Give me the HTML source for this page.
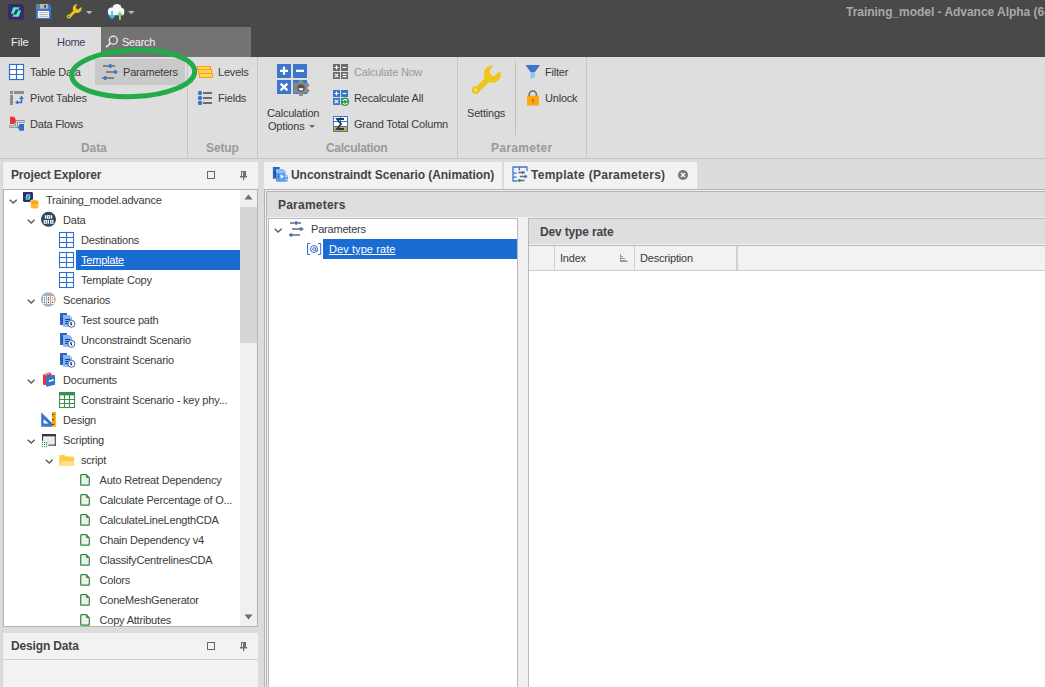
<!DOCTYPE html>
<html><head><meta charset="utf-8">
<style>
*{box-sizing:border-box;margin:0;padding:0}
html,body{width:1045px;height:687px;overflow:hidden;background:#dcdcdc;font-family:"Liberation Sans",sans-serif;font-size:11px;color:#3a3a3a;letter-spacing:-0.2px}
.a{position:absolute}
.t{position:absolute;white-space:nowrap;line-height:13px}
.b{font-weight:bold}
svg{position:absolute;overflow:visible}
</style></head><body>

<!-- title bar -->
<div class="a" style="left:0;top:0;width:1045px;height:57px;background:#494949"></div>
<div class="t b" style="left:846px;top:6px;font-size:12px;color:#a9a9a9;letter-spacing:-0.03px">Training_model - Advance Alpha (64-bit)</div>


<!-- title icons -->
<svg style="left:8px;top:4px" width="17" height="17"><path d="M0 0H14L16 2V15.7H2L0 13.7Z" fill="#372a6c"/><path d="M5.2 3.2H11.5L10.6 5.5H7.8L5.8 9.8H3Z" fill="#4cf0c8"/><path d="M10.8 12.8H4.5L5.4 10.5H8.2L10.2 6.2H13Z" fill="#4cf0c8"/></svg>
<svg style="left:36px;top:4px" width="16" height="16"><path d="M0 0H12.8L15 2.2V15H0Z" fill="#3b7ad0"/><rect x="1.7" y="0" width="10.1" height="4.7" fill="#b8b8b8"/><rect x="1.7" y="0" width="2.3" height="4.7" fill="#7a7a7a"/><rect x="8.1" y="1.2" width="1.9" height="2.5" fill="#454545"/><rect x="1.9" y="7" width="11" height="6.8" fill="#fff"/><path d="M3.2 8.6H11.8M3.2 10.5H11.8M3.2 12.3H11.8" stroke="#9a9a9a" stroke-width="0.8"/></svg>
<svg style="left:66px;top:4px" width="17" height="17"><defs><mask id="wm2"><rect x="-5" y="-5" width="30" height="30" fill="#fff"/><path d="M12.6 -1L9.9 2.6Q9.5 3.2 10 3.9L11 5.2Q11.6 5.8 12.3 5.3L16.5 2Z" fill="#000"/><circle cx="2.85" cy="12.5" r="0.8" fill="#000"/></mask></defs><g mask="url(#wm2)" fill="#f0c419"><circle cx="11.15" cy="4.6" r="4.4"/><path d="M9.2 4.7L11.2 6.7L4.1 13.9L2.1 11.9Z"/><circle cx="2.85" cy="12.5" r="2.1"/></g></svg>
<svg style="left:86px;top:11px" width="7" height="4"><path d="M0 0H6.5L3.25 3.2Z" fill="#b9b9b9"/></svg>
<svg style="left:107px;top:3px" width="19" height="18"><g fill="#fafafa"><circle cx="10" cy="5.6" r="4.6"/><circle cx="4.6" cy="8.2" r="3.7"/><circle cx="14.3" cy="8" r="3"/><rect x="1" y="8" width="16.3" height="4" rx="2"/></g><rect x="4.2" y="8" width="1.7" height="5" fill="#48b8f0"/><path d="M1.3 12H8.8L5.05 16.6Z" fill="#48b8f0"/><path d="M9.2 12.6H16.6L12.9 8Z" fill="#8ee0a8"/><rect x="12" y="12.4" width="1.8" height="4.4" fill="#8ee0a8"/></svg>
<svg style="left:128px;top:11px" width="7" height="4"><path d="M0 0H6.5L3.25 3.2Z" fill="#b9b9b9"/></svg>

<!-- tabs -->
<div class="t" style="left:11px;top:36px;color:#f2f2f2;font-size:11px;letter-spacing:0">File</div>
<div class="a" style="left:40px;top:27px;width:61px;height:31px;background:#dedede"></div>
<div class="t" style="left:57px;top:36px;color:#3c3c6a;font-size:11px;letter-spacing:-0.3px">Home</div>
<div class="a" style="left:101px;top:27px;width:150px;height:30px;background:#737373"></div>
<div class="t" style="left:122px;top:36px;color:#f4f4f4;font-size:11px;letter-spacing:-0.3px">Search</div>

<!-- search icon -->
<svg style="left:105px;top:35px" width="14" height="14"><circle cx="8.3" cy="5.2" r="4" stroke="#f2f2f2" stroke-width="1.3" fill="none"/><path d="M5.5 8L1.2 12.3" stroke="#f2f2f2" stroke-width="1.6"/></svg>
<!-- ribbon -->
<div class="a" style="left:0;top:57px;width:1045px;height:102px;background:#dedede;border-bottom:1px solid #c4c4c4"></div>


<!-- ribbon content -->
<div class="a" style="left:95px;top:59px;width:90px;height:26px;background:#c9c9c9"></div>
<div class="a" style="left:187px;top:57px;width:1px;height:101px;background:#c6c6c6"></div>
<div class="a" style="left:257px;top:57px;width:1px;height:101px;background:#c6c6c6"></div>
<div class="a" style="left:457px;top:57px;width:1px;height:101px;background:#c6c6c6"></div>
<div class="a" style="left:586px;top:57px;width:1px;height:101px;background:#c6c6c6"></div>
<div class="a" style="left:515px;top:61px;width:1px;height:74px;background:#c0c0c0"></div>

<!-- table data icon -->
<svg style="left:9px;top:64px" width="16" height="17"><rect x="0.5" y="0.5" width="14" height="15" fill="#fff" stroke="#2f70cf" stroke-width="1.2"/><path d="M7.5 0V16M0 5.5H15M0 10.5H15" stroke="#2f70cf" stroke-width="1.2"/></svg>
<div class="t" style="left:30px;top:66px">Table Data</div>
<!-- params sliders -->
<svg style="left:102px;top:64px" width="17" height="17"><path d="M1 2H13M4 8H15.5M0 14H12" stroke="#6b6b6b" stroke-width="1.7"/><rect x="7" y="0" width="2.6" height="4" rx="1" fill="#3b76cc"/><rect x="12" y="6" width="2.6" height="4" rx="1" fill="#3b76cc"/><rect x="2" y="12" width="2.6" height="4" rx="1" fill="#3b76cc"/></svg>
<div class="t" style="left:123px;top:66px">Parameters</div>
<!-- pivot -->
<svg style="left:9px;top:91px" width="16" height="15"><rect x="1" y="0" width="3" height="3" fill="#8c8c8c"/><rect x="1" y="4" width="3" height="10" fill="#8c8c8c"/><rect x="5" y="0" width="10" height="3" fill="#8c8c8c"/><path d="M12.5 7V11.4H8" stroke="#2f6fc9" stroke-width="1.5" fill="none"/><path d="M10.2 8L12.5 4.6L14.8 8ZM9 9.2L6 11.4L9 13.6Z" fill="#2f6fc9"/></svg>
<div class="t" style="left:30px;top:92px">Pivot Tables</div>
<!-- data flows -->
<svg style="left:9px;top:117px" width="17" height="15"><path d="M14.3 4.45H7.6V9.65H1.7" stroke="#8c8c8c" stroke-width="2.7" fill="none" stroke-linecap="square"/><path d="M14.3 4.45H7.6V9.65H1.7" stroke="#e6e6e6" stroke-width="0.9" fill="none" stroke-linecap="square"/><path d="M1 -0.2H5.4L7 3.5L5.4 7.1H1Z" fill="#e5323f"/><path d="M15 7.1V13.8H10.5L9 10.5L10.5 7.1Z" fill="#2f6fc9"/></svg>
<div class="t" style="left:30px;top:118px">Data Flows</div>
<div class="t b" style="left:81px;top:142px;font-size:12px;color:#9a9a9a;letter-spacing:-0.1px">Data</div>

<!-- levels -->
<svg style="left:197px;top:66px" width="17" height="13"><rect x="0.5" y="0.5" width="13" height="3" fill="#ffd26a" stroke="#ff9f00"/><rect x="1.5" y="3.5" width="13" height="4" fill="#ffd26a" stroke="#ff9f00"/><rect x="2.5" y="7.5" width="13" height="4" fill="#ffd26a" stroke="#ff9f00"/></svg>
<div class="t" style="left:218px;top:66px">Levels</div>
<!-- fields -->
<svg style="left:197px;top:90px" width="16" height="16"><circle cx="3" cy="3" r="2.2" fill="#3b76cc"/><circle cx="3" cy="8" r="2.2" fill="#3b76cc"/><circle cx="3" cy="13" r="2.2" fill="#3b76cc"/><path d="M6 3H15M6 8H15M6 13H15" stroke="#6b6b6b" stroke-width="2"/></svg>
<div class="t" style="left:218px;top:92px">Fields</div>
<div class="t b" style="left:206px;top:142px;font-size:12px;color:#9a9a9a;letter-spacing:-0.1px">Setup</div>

<!-- calculation options -->
<svg style="left:277px;top:64px" width="33" height="33"><rect x="0" y="0" width="14" height="14" fill="#3b76cc"/><rect x="16" y="0" width="14" height="14" fill="#3b76cc"/><rect x="0" y="16" width="14" height="14" fill="#3b76cc"/><rect x="16" y="16" width="14" height="14" fill="#3b76cc"/>
<path d="M3 6.8H11M7 2.8V10.8M19 6.8H27M3.6 19.6L10.4 26.4M10.4 19.6L3.6 26.4" stroke="#fff" stroke-width="2.2"/>
<g transform="translate(24,24)"><path d="M-1.8,-8 L1.8,-8 L2.3,-5.6 L4.6,-4.4 L6.8,-5.4 L8.6,-2.3 L6.6,-0.9 L6.6,0.9 L8.6,2.3 L6.8,5.4 L4.6,4.4 L2.3,5.6 L1.8,8 L-1.8,8 L-2.3,5.6 L-4.6,4.4 L-6.8,5.4 L-8.6,2.3 L-6.6,0.9 L-6.6,-0.9 L-8.6,-2.3 L-6.8,-5.4 L-4.6,-4.4 L-2.3,-5.6Z" fill="#8a8a8a"/><circle r="3.8" fill="#555"/><path d="M-2.4 0.2A2.4 2.4 0 0 0 2.4 0.2Z" fill="#fff"/></g></svg>
<div class="t" style="left:267px;top:107px">Calculation</div>
<div class="t" style="left:268px;top:120px">Options</div>
<svg style="left:309px;top:125px" width="6" height="4"><path d="M0 0H6L3 3Z" fill="#6b6b6b"/></svg>

<!-- calc now -->
<svg style="left:333px;top:64px" width="15" height="15"><rect x="0" y="0" width="7" height="7" fill="#6b6b6b"/><rect x="8" y="0" width="7" height="7" fill="#6b6b6b"/><rect x="0" y="8" width="7" height="7" fill="#6b6b6b"/><rect x="8" y="8" width="7" height="7" fill="#6b6b6b"/><path d="M1.5 3.5H5.5M3.5 1.5V5.5M9.5 3.5H13.5M1.8 9.8L5.2 13.2M5.2 9.8L1.8 13.2M9.5 10.3H13.5M9.5 12.7H13.5" stroke="#fff" stroke-width="1.2"/></svg>
<div class="t" style="left:354px;top:66px;color:#9a9a9a">Calculate Now</div>
<!-- recalc all -->
<svg style="left:333px;top:90px" width="16" height="16"><rect x="0" y="0" width="7" height="7" fill="#3b76cc"/><rect x="8" y="0" width="7" height="7" fill="#3b76cc"/><rect x="0" y="8" width="7" height="7" fill="#3b76cc"/><rect x="8" y="8" width="7" height="7" fill="#3b76cc"/><path d="M1.5 3.5H5.5M3.5 1.5V5.5M9.5 3.5H13.5M1.8 9.8L5.2 13.2M5.2 9.8L1.8 13.2" stroke="#fff" stroke-width="1.2"/><circle cx="12" cy="11.8" r="4.2" fill="#2e9a4a"/><path d="M9.8 11.2A2.3 2.3 0 0 1 14 10.6M14.2 12.4A2.3 2.3 0 0 1 10 13" stroke="#fff" stroke-width="1.1" fill="none"/></svg>
<div class="t" style="left:354px;top:92px">Recalculate All</div>
<!-- grand total -->
<svg style="left:333px;top:116px" width="16" height="16"><rect x="0.5" y="0.5" width="14" height="15" fill="#fff" stroke="#3b76cc"/><path d="M1 5.5H15M1 10.5H15M7.5 1V15" stroke="#3b76cc"/><rect x="1" y="11" width="13" height="4" fill="#f5a300"/><path d="M11 3H4L8 8L4 13H11" stroke="#253a55" stroke-width="1.8" fill="none"/></svg>
<div class="t" style="left:354px;top:118px">Grand Total Column</div>
<div class="t b" style="left:326px;top:142px;font-size:12px;color:#9a9a9a;letter-spacing:-0.3px">Calculation</div>

<!-- settings -->
<svg style="left:470px;top:65px" width="32" height="30"><defs><mask id="wm"><rect x="-5" y="-5" width="45" height="45" fill="#fff"/><path d="M25.2 -2L19.8 5.2Q19 6.5 20 7.8L22 10.4Q23.2 11.6 24.6 10.6L33 4Z" fill="#000"/><circle cx="5.7" cy="25" r="1.4" fill="#000"/></mask></defs><g mask="url(#wm)" fill="#f0c419"><circle cx="22.3" cy="9.2" r="8.6"/><path d="M18.5 9.5L22.5 13.5L8.2 27.8L4.2 23.8Z"/><circle cx="5.7" cy="25" r="3.9"/></g></svg>
<div class="t" style="left:467px;top:107px">Settings</div>
<!-- filter -->
<svg style="left:525px;top:65px" width="16" height="15"><path d="M0.5 0H15L10 7H5.5Z" fill="#3b76cc"/><path d="M5.5 7H10V12L5.8 14Z" fill="#8ec4fc"/></svg>
<div class="t" style="left:545px;top:66px">Filter</div>
<!-- unlock -->
<svg style="left:526px;top:90px" width="14" height="16"><path d="M3.2 6.5V4.6A3.6 3.6 0 0 1 10.4 4.6V6.5" stroke="#6b6b6b" stroke-width="1.6" fill="none"/><rect x="1" y="5.8" width="12" height="9.8" rx="1.2" fill="#ffa808"/><circle cx="7" cy="10" r="1.1" fill="#6f7891"/><path d="M6.3 10.3H7.7L7.3 13.2H6.7Z" fill="#6f7891"/></svg>
<div class="t" style="left:545px;top:92px">Unlock</div>
<div class="t b" style="left:491px;top:142px;font-size:12px;color:#9a9a9a;letter-spacing:0.3px">Parameter</div>

<!-- green ellipse -->
<svg style="left:0;top:0" width="300" height="120"><ellipse cx="133.2" cy="73.4" rx="61.5" ry="23.2" fill="none" stroke="#22ab4b" stroke-width="5" transform="rotate(-2 133 73)"/></svg>

<!-- panels -->
<!-- Project explorer -->
<div class="a" style="left:2px;top:159px;width:1px;height:528px;background:#d2d2d2"></div>
<div class="a" style="left:3px;top:162px;width:255px;height:27px;background:#f2f2f2"></div>
<div class="t b" style="left:11px;top:169px;font-size:12px;letter-spacing:-0.15px;color:#444">Project Explorer</div>
<div class="a" style="left:3px;top:189px;width:255px;height:438px;background:#fff;border:1px solid #b4b4b4"></div>
<div class="a" style="left:240px;top:190px;width:17px;height:436px;background:#f0f0f0"></div>
<div class="a" style="left:240px;top:207px;width:17px;height:136px;background:#d5d5d5"></div>

<!-- tree -->
<div class="a" style="left:4px;top:189px;width:236px;height:437px;overflow:hidden;clip-path:inset(1px 0 0 0)">
<svg style="left:5px;top:9.5px" width="9" height="6"><path d="M0.7 0.8L4.2 4.1L7.7 0.8" stroke="#595959" stroke-width="1.35" fill="none"/></svg>
<svg style="left:18px;top:3px" width="18" height="17"><path d="M1 0H10L11 1V10H2L1 9Z" fill="#372a6c"/><path d="M4.6 2.3H8.4L7.9 3.6H6.2L5 6.3H3.3Z" fill="#4cf0c8"/><path d="M7.4 7.7H3.6L4.1 6.4H5.8L7 3.7H8.7Z" fill="#4cf0c8"/><g fill="#ffa60d" stroke="#fff" stroke-width="0.8"><path d="M8.4 9.6A4.2 1.9 0 0 1 16.8 9.6V15A4.2 1.9 0 0 1 8.4 15Z"/></g><path d="M8.8 12.3A3.9 1.2 0 0 0 16.4 12.3M8.8 14.2A3.9 1.2 0 0 0 16.4 14.2" stroke="#ffd890" stroke-width="0.8" fill="none"/></svg>
<div class="t" style="left:42px;top:5px">Training_model.advance</div>
<svg style="left:23px;top:29.5px" width="9" height="6"><path d="M0.7 0.8L4.2 4.1L7.7 0.8" stroke="#595959" stroke-width="1.35" fill="none"/></svg>
<svg style="left:37px;top:23px" width="16" height="16"><circle cx="7.5" cy="7.3" r="7.5" fill="#2c4a62"/><g fill="#fff"><rect x="3.9" y="3.2" width="1.3" height="3.4"/><rect x="9.9" y="3.2" width="1.3" height="3.4"/><rect x="6.7" y="8.1" width="1.3" height="3.6"/></g><g fill="none" stroke="#fff" stroke-width="1.1"><rect x="6.4" y="3.75" width="2.3" height="2.4"/><rect x="3.3" y="8.65" width="2.3" height="2.5"/><rect x="9.6" y="8.65" width="2.3" height="2.5"/></g></svg>
<div class="t" style="left:59px;top:25px">Data</div>
<svg style="left:55px;top:43px" width="16" height="17"><rect x="0.5" y="0.5" width="14" height="15" fill="#fff" stroke="#2f70cf" stroke-width="1.1"/><path d="M7.5 0V16M0 5.5H15M0 10.5H15" stroke="#2f70cf" stroke-width="1.1"/></svg>
<div class="t" style="left:77px;top:45px">Destinations</div>
<div class="a" style="left:72px;top:61px;width:164px;height:20px;background:#1b6cd2"></div>
<svg style="left:55px;top:63px" width="16" height="17"><rect x="0.5" y="0.5" width="14" height="15" fill="#fff" stroke="#2f70cf" stroke-width="1.1"/><path d="M7.5 0V16M0 5.5H15M0 10.5H15" stroke="#2f70cf" stroke-width="1.1"/></svg>
<div class="t" style="left:77px;top:65px;color:#fff;text-decoration:underline">Template</div>
<svg style="left:55px;top:83px" width="16" height="17"><rect x="0.5" y="0.5" width="14" height="15" fill="#fff" stroke="#2f70cf" stroke-width="1.1"/><path d="M7.5 0V16M0 5.5H15M0 10.5H15" stroke="#2f70cf" stroke-width="1.1"/></svg>
<div class="t" style="left:77px;top:85px">Template Copy</div>
<svg style="left:23px;top:109.5px" width="9" height="6"><path d="M0.7 0.8L4.2 4.1L7.7 0.8" stroke="#595959" stroke-width="1.35" fill="none"/></svg>
<svg style="left:37px;top:103px" width="16" height="16"><circle cx="7.3" cy="7.5" r="7.3" fill="#aab0b8"/><g fill="#fff"><rect x="2.1" y="4" width="2.9" height="7.8"/><rect x="6" y="4" width="2.9" height="7.8"/><rect x="10" y="4" width="2.9" height="7.8"/></g><path d="M3.55 4.8V8.9" stroke="#4ab4f0" stroke-width="1.2"/><path d="M7.45 4.8V8.9" stroke="#f0624a" stroke-width="1.2"/><path d="M11.45 4.8V8.9" stroke="#f8c64a" stroke-width="1.2"/><g fill="#3d4a57"><circle cx="3.55" cy="10.4" r="0.7"/><circle cx="7.45" cy="10.4" r="0.7"/><circle cx="11.45" cy="10.4" r="0.7"/></g></svg>
<div class="t" style="left:59px;top:105px">Scenarios</div>
<svg style="left:55px;top:124px" width="17" height="16"><rect x="1" y="0" width="7" height="12" fill="#2f64c0"/><g fill="#0a3a9a"><circle cx="3.4" cy="5.4" r="0.6"/><circle cx="3.4" cy="7.5" r="0.6"/><circle cx="3.4" cy="9.5" r="0.6"/></g><path d="M4 2H10.5L13 4.5V13.8H4Z" fill="#86b6f7"/><path d="M6.2 6.5H11M6.2 8.5H11M6.2 10.5H9.5" stroke="#0b3a9c" stroke-width="1"/><circle cx="12.4" cy="10.8" r="3.5" fill="#fff" stroke="#2f64c0" stroke-width="1"/><path d="M12 9.1V11.1L12.9 12" stroke="#111" stroke-width="1.2" fill="none"/></svg>
<div class="t" style="left:77px;top:125px">Test source path</div>
<svg style="left:55px;top:144px" width="17" height="16"><rect x="1" y="0" width="7" height="12" fill="#2f64c0"/><g fill="#0a3a9a"><circle cx="3.4" cy="5.4" r="0.6"/><circle cx="3.4" cy="7.5" r="0.6"/><circle cx="3.4" cy="9.5" r="0.6"/></g><path d="M4 2H10.5L13 4.5V13.8H4Z" fill="#86b6f7"/><path d="M6.2 6.5H11M6.2 8.5H11M6.2 10.5H9.5" stroke="#0b3a9c" stroke-width="1"/><circle cx="12.4" cy="10.8" r="3.5" fill="#fff" stroke="#2f64c0" stroke-width="1"/><path d="M12 9.1V11.1L12.9 12" stroke="#111" stroke-width="1.2" fill="none"/></svg>
<div class="t" style="left:77px;top:145px">Unconstraindt Scenario</div>
<svg style="left:55px;top:164px" width="17" height="16"><rect x="1" y="0" width="7" height="12" fill="#2f64c0"/><g fill="#0a3a9a"><circle cx="3.4" cy="5.4" r="0.6"/><circle cx="3.4" cy="7.5" r="0.6"/><circle cx="3.4" cy="9.5" r="0.6"/></g><path d="M4 2H10.5L13 4.5V13.8H4Z" fill="#86b6f7"/><path d="M6.2 6.5H11M6.2 8.5H11M6.2 10.5H9.5" stroke="#0b3a9c" stroke-width="1"/><circle cx="12.4" cy="10.8" r="3.5" fill="#fff" stroke="#2f64c0" stroke-width="1"/><path d="M12 9.1V11.1L12.9 12" stroke="#111" stroke-width="1.2" fill="none"/></svg>
<div class="t" style="left:77px;top:165px">Constraint Scenario</div>
<svg style="left:23px;top:189.5px" width="9" height="6"><path d="M0.7 0.8L4.2 4.1L7.7 0.8" stroke="#595959" stroke-width="1.35" fill="none"/></svg>
<svg style="left:38px;top:183px" width="14" height="16"><path d="M1 2.5L7.3 0.3L9.5 1.6V11L4.5 13L1 12.8Z" fill="#e8323e"/><path d="M1.3 2.6L7.3 0.8L8.4 1.6L3 3.6Z" fill="#f5a0a6"/><path d="M4 4.3L12.3 2.8L13 3.6V12.8L4.6 14.8L4 14.1Z" fill="#3a73c9"/><path d="M6.8 9.2L11.8 7.8" stroke="#fff" stroke-width="1.6"/></svg>
<div class="t" style="left:59px;top:185px">Documents</div>
<svg style="left:55px;top:203px" width="17" height="17"><rect x="0.5" y="0.5" width="15" height="15" fill="#fff" stroke="#3d8f50" stroke-width="1.1"/><rect x="0" y="0" width="16" height="3.4" fill="#3d8f50"/><path d="M5.5 3V16M10.5 3V16M0 7.5H16M0 11.5H16" stroke="#3d8f50" stroke-width="1.1"/></svg>
<div class="t" style="left:77px;top:205px">Constraint Scenario - key phy...</div>
<svg style="left:37px;top:223px" width="16" height="16"><path d="M0.2 0.2L11 11V14.7H0.2Z" fill="#3a73c9"/><path d="M2.6 7.2L7.6 11.6H2.6Z" fill="#fff"/><rect x="11" y="0" width="3.8" height="14.7" fill="#f5a300"/><path d="M11 2.5H13M11 7.5H13M11 12.5H13" stroke="#2c3e66" stroke-width="0.9"/></svg>
<div class="t" style="left:59px;top:225px">Design</div>
<svg style="left:23px;top:249.5px" width="9" height="6"><path d="M0.7 0.8L4.2 4.1L7.7 0.8" stroke="#595959" stroke-width="1.35" fill="none"/></svg>
<svg style="left:37px;top:245px" width="16" height="14"><rect x="2.6" y="3.4" width="10.6" height="6.8" fill="#ebebef"/><rect x="1" y="0" width="13.8" height="2.4" fill="#383838"/><rect x="1" y="0" width="1.1" height="7" fill="#383838"/><rect x="13.7" y="0" width="1.1" height="11.7" fill="#383838"/><rect x="7.2" y="10.6" width="7.6" height="1.1" fill="#383838"/><rect x="0.9" y="8" width="1.1" height="1.1" fill="#2e8b37"/><rect x="0.9" y="10" width="1.1" height="1.1" fill="#2e8b37"/><rect x="0.9" y="12.1" width="1.1" height="1.1" fill="#2e8b37"/><rect x="3" y="8" width="1.1" height="1.1" fill="#2e8b37"/><rect x="3" y="10" width="1.1" height="1.1" fill="#2e8b37"/><rect x="3" y="12.1" width="1.1" height="1.1" fill="#2e8b37"/><rect x="5.1" y="8" width="1.1" height="1.1" fill="#2e8b37"/><rect x="5.1" y="10" width="1.1" height="1.1" fill="#2e8b37"/><rect x="5.1" y="12.1" width="1.1" height="1.1" fill="#2e8b37"/></svg>
<div class="t" style="left:59px;top:245px">Scripting</div>
<svg style="left:41px;top:269.5px" width="9" height="6"><path d="M0.7 0.8L4.2 4.1L7.7 0.8" stroke="#595959" stroke-width="1.35" fill="none"/></svg>
<svg style="left:55px;top:266px" width="16" height="13"><path d="M0.3 0.6Q0.3 0 0.9 0H5.5L6.6 1.5H14.5Q15.1 1.5 15.1 2.1V10.8H0.3Z" fill="#ffcb45"/><path d="M2.3 6.3H15.4L14 10.8H0.5Z" fill="#ffe08c"/></svg>
<div class="t" style="left:77px;top:265px">script</div>
<svg style="left:76px;top:285px" width="11" height="13"><path d="M0.7 1.3A0.6 0.6 0 0 1 1.3 0.7H6.3L9.3 3.7V10.6A0.6 0.6 0 0 1 8.7 11.2H1.3A0.6 0.6 0 0 1 0.7 10.6Z" fill="#efeff2" stroke="#2e8b37" stroke-width="1.2"/><path d="M6.1 0.9V3.9H9.1Z" fill="#2e8b37"/></svg>
<div class="t" style="left:95.5px;top:285px">Auto Retreat Dependency</div>
<svg style="left:76px;top:305px" width="11" height="13"><path d="M0.7 1.3A0.6 0.6 0 0 1 1.3 0.7H6.3L9.3 3.7V10.6A0.6 0.6 0 0 1 8.7 11.2H1.3A0.6 0.6 0 0 1 0.7 10.6Z" fill="#efeff2" stroke="#2e8b37" stroke-width="1.2"/><path d="M6.1 0.9V3.9H9.1Z" fill="#2e8b37"/></svg>
<div class="t" style="left:95.5px;top:305px">Calculate Percentage of O...</div>
<svg style="left:76px;top:325px" width="11" height="13"><path d="M0.7 1.3A0.6 0.6 0 0 1 1.3 0.7H6.3L9.3 3.7V10.6A0.6 0.6 0 0 1 8.7 11.2H1.3A0.6 0.6 0 0 1 0.7 10.6Z" fill="#efeff2" stroke="#2e8b37" stroke-width="1.2"/><path d="M6.1 0.9V3.9H9.1Z" fill="#2e8b37"/></svg>
<div class="t" style="left:95.5px;top:325px">CalculateLineLengthCDA</div>
<svg style="left:76px;top:345px" width="11" height="13"><path d="M0.7 1.3A0.6 0.6 0 0 1 1.3 0.7H6.3L9.3 3.7V10.6A0.6 0.6 0 0 1 8.7 11.2H1.3A0.6 0.6 0 0 1 0.7 10.6Z" fill="#efeff2" stroke="#2e8b37" stroke-width="1.2"/><path d="M6.1 0.9V3.9H9.1Z" fill="#2e8b37"/></svg>
<div class="t" style="left:95.5px;top:345px">Chain Dependency v4</div>
<svg style="left:76px;top:365px" width="11" height="13"><path d="M0.7 1.3A0.6 0.6 0 0 1 1.3 0.7H6.3L9.3 3.7V10.6A0.6 0.6 0 0 1 8.7 11.2H1.3A0.6 0.6 0 0 1 0.7 10.6Z" fill="#efeff2" stroke="#2e8b37" stroke-width="1.2"/><path d="M6.1 0.9V3.9H9.1Z" fill="#2e8b37"/></svg>
<div class="t" style="left:95.5px;top:365px">ClassifyCentrelinesCDA</div>
<svg style="left:76px;top:385px" width="11" height="13"><path d="M0.7 1.3A0.6 0.6 0 0 1 1.3 0.7H6.3L9.3 3.7V10.6A0.6 0.6 0 0 1 8.7 11.2H1.3A0.6 0.6 0 0 1 0.7 10.6Z" fill="#efeff2" stroke="#2e8b37" stroke-width="1.2"/><path d="M6.1 0.9V3.9H9.1Z" fill="#2e8b37"/></svg>
<div class="t" style="left:95.5px;top:385px">Colors</div>
<svg style="left:76px;top:405px" width="11" height="13"><path d="M0.7 1.3A0.6 0.6 0 0 1 1.3 0.7H6.3L9.3 3.7V10.6A0.6 0.6 0 0 1 8.7 11.2H1.3A0.6 0.6 0 0 1 0.7 10.6Z" fill="#efeff2" stroke="#2e8b37" stroke-width="1.2"/><path d="M6.1 0.9V3.9H9.1Z" fill="#2e8b37"/></svg>
<div class="t" style="left:95.5px;top:405px">ConeMeshGenerator</div>
<svg style="left:76px;top:425px" width="11" height="13"><path d="M0.7 1.3A0.6 0.6 0 0 1 1.3 0.7H6.3L9.3 3.7V10.6A0.6 0.6 0 0 1 8.7 11.2H1.3A0.6 0.6 0 0 1 0.7 10.6Z" fill="#efeff2" stroke="#2e8b37" stroke-width="1.2"/><path d="M6.1 0.9V3.9H9.1Z" fill="#2e8b37"/></svg>
<div class="t" style="left:95.5px;top:425px">Copy Attributes</div>
</div>
<svg style="left:244px;top:194px" width="9" height="6"><path d="M0.5 5.5H8.5L4.5 0.5Z" fill="#6d6d6d"/></svg>
<svg style="left:244px;top:614px" width="9" height="6"><path d="M0.5 0.5H8.5L4.5 5.5Z" fill="#6d6d6d"/></svg>
<div class="a" style="left:207px;top:171px;width:8px;height:8px;border:1.2px solid #666"></div><svg style="left:238px;top:170px" width="10" height="11"><rect x="3.5" y="1.5" width="4" height="5" fill="none" stroke="#6e6e6e"/><rect x="5" y="1.5" width="2.5" height="5" fill="#6e6e6e"/><rect x="2" y="6" width="7" height="1.5" fill="#6e6e6e"/><rect x="5" y="7" width="1.2" height="3.2" fill="#6e6e6e"/></svg>
<!-- Design data -->
<div class="a" style="left:3px;top:633px;width:255px;height:60px;background:#f2f2f2"></div>
<div class="a" style="left:3px;top:659px;width:255px;height:1px;background:#d0d0d0"></div>
<div class="t b" style="left:11px;top:639.5px;font-size:12px;letter-spacing:-0.15px;color:#444">Design Data</div>
<div class="a" style="left:207px;top:642px;width:8px;height:8px;border:1.2px solid #666"></div><svg style="left:238px;top:641px" width="10" height="11"><rect x="3.5" y="1.5" width="4" height="5" fill="none" stroke="#6e6e6e"/><rect x="5" y="1.5" width="2.5" height="5" fill="#6e6e6e"/><rect x="2" y="6" width="7" height="1.5" fill="#6e6e6e"/><rect x="5" y="7" width="1.2" height="3.2" fill="#6e6e6e"/></svg>

<!-- document area -->
<div class="a" style="left:264px;top:159px;width:781px;height:531px;background:#dcdcdc;"></div>
<div class="a" style="left:264px;top:162px;width:238px;height:27px;background:#f2f2f2"></div>
<div class="t b" style="left:291px;top:169px;font-size:12px;letter-spacing:-0.06px;color:#444">Unconstraindt Scenario (Animation)</div>
<div class="a" style="left:504px;top:162px;width:193px;height:27px;background:#f2f2f2"></div>
<div class="t b" style="left:531px;top:169px;font-size:12px;letter-spacing:0.28px;color:#444">Template (Parameters)</div>
<div class="a" style="left:264px;top:189px;width:781px;height:500px;background:#f0f0f0;border-left:1px solid #b4b4b4;border-top:1px solid #b4b4b4"></div>
<div class="a" style="left:266px;top:191px;width:779px;height:500px;background:#dedede;border-left:1px solid #b4b4b4;border-top:1px solid #b4b4b4"></div>
<div class="t b" style="left:278px;top:198.5px;font-size:12px;letter-spacing:0.22px;color:#444">Parameters</div>
<div class="a" style="left:267px;top:217px;width:778px;height:471px;background:#f0f0f0"></div>
<div class="a" style="left:268px;top:218px;width:250px;height:470px;background:#fff;border:1px solid #b9b9b9"></div>
<div class="a" style="left:528px;top:218px;width:517px;height:470px;background:#fff;border:1px solid #b9b9b9;border-right:none"></div>
<div class="a" style="left:529px;top:219px;width:516px;height:27px;background:#dedede;border-bottom:1px solid #b8b8b8"></div>
<div class="a" style="left:529px;top:244px;width:516px;height:1px;background:#f2f2f2"></div>
<div class="t b" style="left:540px;top:225.5px;font-size:12px;letter-spacing:-0.15px;color:#444">Dev type rate</div>
<div class="a" style="left:529px;top:246px;width:516px;height:25px;background:#f2f2f2;border-bottom:1px solid #cfcfcf"></div>
<div class="a" style="left:554px;top:246px;width:1px;height:24px;background:#cfcfcf"></div>
<div class="a" style="left:634px;top:246px;width:1px;height:24px;background:#cfcfcf"></div>
<div class="a" style="left:736px;top:246px;width:2px;height:24px;background:#cfcfcf"></div>
<div class="t" style="left:560px;top:252px">Index</div>
<div class="t" style="left:640px;top:252px">Description</div>


<!-- tab icons -->
<svg style="left:272px;top:166px" width="17" height="17"><rect x="0.9" y="1" width="6.8" height="11.7" fill="#2f64c0"/><g fill="#0a3a9a"><circle cx="3.3" cy="6.3" r="0.7"/><circle cx="3.3" cy="8.3" r="0.7"/><circle cx="3.3" cy="10.3" r="0.7"/></g><path d="M4 3.2H11L13.5 5.5V9.5H15.9V13.5A2.2 2.2 0 0 1 13.7 15.7H4Z" fill="#5f9cec"/><path d="M4 3.2H11L13.5 5.5V7H4Z" fill="#8fbdf7"/><g fill="#0a3a9a"><circle cx="6.4" cy="8.8" r="0.6"/><circle cx="6.4" cy="10.8" r="0.6"/></g><path d="M8.6 8.2V12.8L12 10.5Z" fill="#fff"/><g fill="#d8e8ff"><rect x="13.6" y="6.4" width="1.6" height="1.1"/><rect x="13.6" y="10" width="1.6" height="1.1"/><rect x="13.6" y="13" width="1.6" height="1.1"/></g></svg>
<svg style="left:512px;top:166px" width="17" height="17"><path d="M1 7.5V1H15V5M1 1V15H5M1 7.2H4.8M1 11.2H4.8M7.4 1V4.5" stroke="#3b76cc" stroke-width="1.3" fill="none" stroke-linejoin="round"/><path d="M6.2 6.5H13M7.8 10.5H15.2M5.5 14.5H12.5" stroke="#6b6b6b" stroke-width="1.3"/><rect x="9.6" y="5" width="2" height="3" rx="0.8" fill="#3b76cc"/><rect x="12.3" y="9" width="2" height="3" rx="0.8" fill="#3b76cc"/><rect x="6.5" y="13" width="2" height="3" rx="0.8" fill="#3b76cc"/></svg>
<svg style="left:677px;top:169px" width="12" height="12"><circle cx="6" cy="6" r="5" fill="#777"/><path d="M4 4L8 8M8 4L4 8" stroke="#fff" stroke-width="1.4"/></svg>
<!-- parameters tree -->
<svg style="left:274px;top:227.5px" width="9" height="6"><path d="M0.7 0.8L4.2 4.1L7.7 0.8" stroke="#595959" stroke-width="1.35" fill="none"/></svg>
<svg style="left:288px;top:221px" width="17" height="17"><path d="M2 2H13M4 8H15.5M1 14H12" stroke="#6b6b6b" stroke-width="1.6"/><rect x="7" y="0.3" width="2.4" height="3.4" rx="0.8" fill="#3b76cc"/><rect x="11.7" y="6.3" width="2.4" height="3.4" rx="0.8" fill="#3b76cc"/><rect x="2" y="12.3" width="2.4" height="3.4" rx="0.8" fill="#3b76cc"/></svg>
<div class="t" style="left:311px;top:223px">Parameters</div>
<div class="a" style="left:323px;top:239px;width:194px;height:20px;background:#1b6cd2"></div>
<svg style="left:307px;top:243px" width="16" height="14"><path d="M3.2 0.5H0.5V11.5H3.2M11 0.5H13.7V11.5H11" stroke="#2f70cf" stroke-width="1" fill="none"/><circle cx="7.1" cy="6" r="3.5" stroke="#2f70cf" stroke-width="1" fill="none"/><circle cx="7.1" cy="6" r="1.4" stroke="#2f70cf" stroke-width="0.9" fill="none"/><path d="M8.6 4.6V7.2A0.8 0.8 0 0 0 10.6 7.2" stroke="#2f70cf" stroke-width="0.9" fill="none"/></svg>
<div class="t" style="left:329px;top:243px;color:#fff;text-decoration:underline;letter-spacing:0.08px">Dev type rate</div>
<!-- index sort icon -->
<svg style="left:620px;top:254px" width="9" height="9"><path d="M0.5 0V8M0 2.5H3M0 4.5H5M0 6.5H6.5M0 7.5H8" stroke="#9a9a9a" stroke-width="1"/></svg>

</body></html>
